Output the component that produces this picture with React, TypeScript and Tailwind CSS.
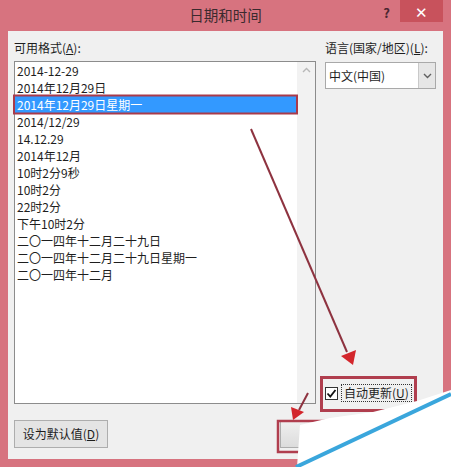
const formats = [
  "2014-12-29",
  "2014年12月29日",
  "2014年12月29日星期一",
  "2014/12/29",
  "14.12.29",
  "2014年12月",
  "10时2分9秒",
  "10时2分",
  "22时2分",
  "下午10时2分",
  "二〇一四年十二月二十九日",
  "二〇一四年十二月二十九日星期一",
  "二〇一四年十二月",
]

const selected = 2

export default function App() {
  return (
    <div
      className="relative w-[451px] h-[467px] overflow-hidden bg-[#d7737f] flex flex-col text-[#1e1e1e]"
      style={{ fontFamily: '"Noto Sans CJK SC", "Noto Sans", sans-serif' }}
    >
      {/* title bar */}
      <div className="h-[31px] flex">
        <div className="flex-1" />
        <div className="pt-[4px] text-[14.5px] leading-[22px] text-[#3b2a2e]">日期和时间</div>
        <div className="flex-1 flex justify-end items-start">
          <span className="mt-[4px] mr-[10px] text-[13px] leading-[18px] font-bold text-[#4a2530]">?</span>
          <div className="w-[43px] h-[22px] mr-[8px] bg-[#c8525c] flex items-center justify-center text-white text-[15px] leading-none">
            ✕
          </div>
        </div>
      </div>

      {/* dialog body */}
      <div className="mx-[8px] mb-[8px] flex-1 bg-[#f0f0f0] px-[6px] pt-[10px] flex flex-col text-[12px]">
        <div className="flex">
          <div className="w-[302px] flex flex-col">
            <div className="h-[14px] leading-[14px]">
              可用格式(<span className="underline">A</span>):
            </div>
            <div className="mt-[6px] h-[343px] border border-[#8c8c8c] bg-white flex">
              <div className="flex-1 flex flex-col">
                {formats.map((f, i) => (
                  <div
                    key={f}
                    className={
                      i === selected
                        ? "h-[17px] leading-[17px] pl-[2px] bg-[#3399ff] text-white"
                        : "h-[17px] leading-[17px] pl-[2px]"
                    }
                  >
                    {f}
                  </div>
                ))}
              </div>
              <div className="w-[18px] bg-[#f2f2f2] flex justify-center pt-[5px]">
                <svg width="9" height="6" viewBox="0 0 9 6">
                  <path d="M1 5 L4.5 1.5 L8 5" fill="none" stroke="#b8b8b8" strokeWidth="1.4" />
                </svg>
              </div>
            </div>
          </div>

          <div className="ml-[9px] w-[111px] flex flex-col">
            <div className="h-[14px] leading-[14px] whitespace-nowrap">
              语言(国家/地区)(<span className="underline">L</span>):
            </div>
            <div className="mt-[7px] h-[27px] border border-[#a9a9a9] bg-white flex">
              <div className="flex-1 pl-[3px] leading-[25px]">中文(中国)</div>
              <div className="w-[17px] border-l border-[#c9c9c9] bg-[#e6e6e6] flex items-center justify-center">
                <svg width="9" height="6" viewBox="0 0 9 6">
                  <path d="M1 1 L4.5 4.5 L8 1" fill="none" stroke="#606060" strokeWidth="1.4" />
                </svg>
              </div>
            </div>
            <div className="flex-1" />
            <div className="mb-[2px] flex items-center">
              <div className="w-[13px] h-[13px] border border-[#333] bg-white flex items-center justify-center">
                <svg width="11" height="11" viewBox="0 0 11 11">
                  <path d="M1.5 5.5 L4.3 8.5 L9.5 2" fill="none" stroke="#111" strokeWidth="1.8" />
                </svg>
              </div>
              <div className="ml-[3px] px-[2px] h-[18px] leading-[16px] border border-dotted border-[#333]">
                自动更新(<span className="underline">U</span>)
              </div>
            </div>
          </div>
        </div>

        <div className="mt-[16px] flex">
          <div className="w-[94px] h-[28px] border border-[#adadad] bg-[#e4e4e4] flex items-center justify-center">
            设为默认值(<span className="underline">D</span>)
          </div>
          <div className="flex-1" />
          <div className="w-[75px] h-[28px] border border-[#adadad] bg-gradient-to-b from-[#f0f0f0] to-[#dcdcdc] flex items-center justify-center">
            确定
          </div>
          <div className="ml-[7px] w-[75px] h-[28px] border border-[#adadad] bg-[#e4e4e4] flex items-center justify-center">
            取消
          </div>
        </div>
      </div>

      {/* annotations */}
      <svg className="absolute inset-0 pointer-events-none" width="451" height="467" viewBox="0 0 451 467">
        <rect x="14" y="95.5" width="283" height="18" fill="none" stroke="#a93a4a" strokeWidth="2" />
        <rect x="321.5" y="377.5" width="94" height="33" fill="none" stroke="#b03e4e" strokeWidth="3" />
        <rect x="278" y="421" width="80" height="31" fill="none" stroke="#b03e4e" strokeWidth="2.5" />
        <line x1="251" y1="129" x2="347" y2="352" stroke="#8e3340" strokeWidth="2" />
        <polygon points="341,356 356,350 353,365" fill="#d3262c" />
        <line x1="308" y1="393" x2="299" y2="410" stroke="#8e3340" strokeWidth="2" />
        <polygon points="291,407 304,412 293,420" fill="#d3262c" />
        <polygon points="297,467 300,425 330,418 373,412 417,401 451,390 451,467" fill="#ffffff" />
        <line x1="296" y1="467" x2="451" y2="394" stroke="#3aa6dc" strokeWidth="4" />
      </svg>
    </div>
  )
}
